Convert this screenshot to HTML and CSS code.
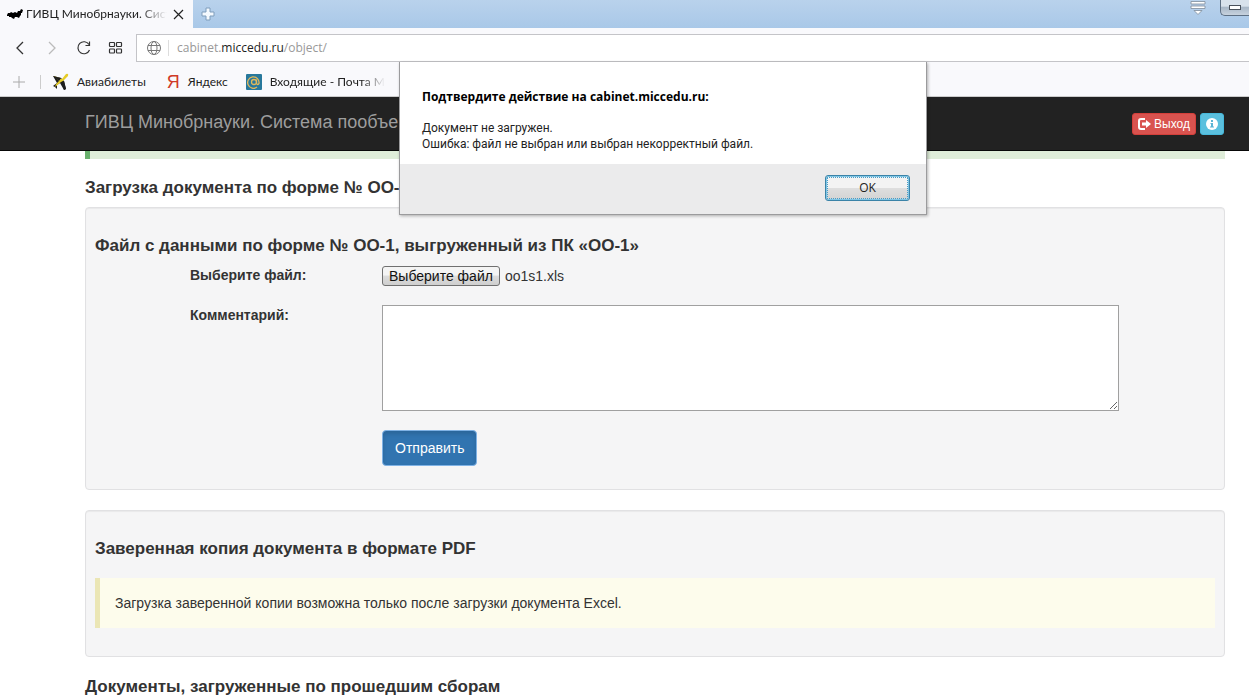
FILE: index.html
```html
<!DOCTYPE html>
<html lang="ru">
<head>
<meta charset="utf-8">
<title>ГИВЦ Минобрнауки. Система пообъектного учета</title>
<link rel="stylesheet" href="styles.css">
</head>
<body>
<div class="browser">
  <div class="tabstrip">
    <div class="tab">
      <svg class="tab-icon" width="16" height="10" viewBox="0 0 16 10"><path d="M0 6L1 4L3 4L4 3L6 4L8 3L10 4L11 2L13 2L14 0L16 1L15 4L14 4L14 6L13 7L12 9L10 8L8 8L7 10L5 9L4 8L2 8L2 7L0 7Z" fill="#000"/></svg>
      <span class="tab-title">ГИВЦ Минобрнауки. Сист</span>
      <button class="plain tab-close" aria-label="Закрыть вкладку"><svg width="11" height="11" viewBox="0 0 11 11"><path d="M1 1L10 10M10 1L1 10" stroke="#222" stroke-width="1.2"/></svg></button>
    </div>
    <button class="plain new-tab" aria-label="Новая вкладка"><svg width="14" height="14" viewBox="0 0 14 14"><path d="M5 1H9V5H13V9H9V13H5V9H1V5H5Z" fill="#f4f9fe" stroke="#7f9dbb"/></svg></button>
    <div class="window-tools">
      <button class="plain" aria-label="Меню вкладок"><svg width="16" height="16" viewBox="0 0 16 16"><path d="M1 1.500H15V4H1ZM1 6H15V8.500H1ZM4 10.500H12L8 14.500Z" fill="#fff" stroke="#7d8b9a" stroke-width=".8"/></svg></button>
      <button class="minimize" aria-label="Свернуть"><svg width="12" height="5" viewBox="0 0 12 5"><rect x=".5" y=".5" width="11" height="4" fill="#fff" stroke="#4a525c"/></svg></button>
    </div>
  </div>
  <div class="toolbar">
    <div class="nav-buttons">
      <button class="plain" aria-label="Назад"><svg width="16" height="16" viewBox="0 0 16 16"><path d="M11 2L5 8L11 14" fill="none" stroke="#333" stroke-width="1.300"/></svg></button>
      <button class="plain" aria-label="Вперёд"><svg width="16" height="16" viewBox="0 0 16 16"><path d="M5 2L11 8L5 14" fill="none" stroke="#bbb" stroke-width="1.300"/></svg></button>
      <button class="plain" aria-label="Обновить"><svg width="16" height="16" viewBox="0 0 16 16"><path d="M13.500 10A6 6 0 1 1 13 4.500M13.500 1.500V5.500H9.500" fill="none" stroke="#333" stroke-width="1.200"/></svg></button>
      <button class="plain" aria-label="Экспресс-панель"><svg width="16" height="16" viewBox="0 0 16 16"><g fill="none" stroke="#333" stroke-width="1.200"><rect x="1.500" y="2.500" width="5" height="4" rx=".7"/><rect x="8.500" y="2.500" width="5" height="4" rx=".7"/><rect x="1.500" y="9" width="5" height="4" rx=".7"/><rect x="8.500" y="9" width="5" height="4" rx=".7"/></g></svg></button>
    </div>
    <div class="address">
      <svg width="16" height="16" viewBox="0 0 16 16"><g fill="none" stroke="#777"><circle cx="8" cy="8" r="6.500"/><ellipse cx="8" cy="8" rx="3" ry="6.500"/><path d="M2 5.500H14M2 10.500H14"/></g></svg>
      <span class="url">cabinet.<span class="domain">miccedu.ru</span>/object/</span>
    </div>
  </div>
  <nav class="bookmarks">
    <button class="plain add-bookmark" aria-label="Добавить закладку"><svg width="14" height="14" viewBox="0 0 14 14"><path d="M7 1V13M1 7H13" stroke="#aaa"/></svg></button>
    <a class="bookmark plane" href="#"><svg width="18" height="18" viewBox="0 0 18 18"><path d="M1 3L9 5L12 8L14 16L12 17L8 10L5 12L5 16L3 14L1 13L5 10Z" fill="#1d1d1d"/><path d="M3 14L4 11L7 8L2 3L10 6L14 1Q17 0 16 3L11 8L9 9Z" fill="#e6cc28"/><path d="M1 3L9 5L7 8ZM10 9L12 8L14 16L12 17Z" fill="#1d1d1d"/></svg>Авиабилеты</a>
    <a class="bookmark yandex" href="#"><span class="ya">Я</span>Яндекс</a>
    <a class="bookmark mail" href="#"><svg width="16" height="16" viewBox="0 0 16 16"><rect width="16" height="16" rx="1" fill="#28789c"/><g fill="none" stroke="#e2b95b" stroke-width="1.300"><circle cx="8" cy="8" r="2.500"/><path d="M10.500 5.500V9.500Q11.500 11.500 13 9.500A5.700 5.700 0 1 0 11 13"/></g></svg><span class="fade">Входящие - Почта M</span></a>
    <span class="next-mark">1</span>
  </nav>
</div>

<header class="navbar">
  <a class="brand" href="#">ГИВЦ Минобрнауки. Система пообъе</a>
  <div class="nav-actions">
    <button class="btn danger"><svg width="13" height="12" viewBox="0 0 13 12"><path d="M7 1H3Q1 1 1 3V9Q1 11 3 11H7" fill="none" stroke="#fff" stroke-width="2"/><path d="M4 4.500H8V2L13 6L8 10V7.500H4Z" fill="#fff"/></svg>Выход</button>
    <button class="btn info" aria-label="Информация"><svg width="12" height="12" viewBox="0 0 12 12"><circle cx="6" cy="6" r="6" fill="#fff"/><path d="M5 2H7V4H5ZM4.500 5H7V8.500H8V9.500H4V8.500H5V6H4.500Z" fill="#5bb5d5"/></svg></button>
  </div>
</header>

<main class="page">
  <div class="success-strip"></div>
  <h4 class="section-title">Загрузка документа по форме № ОО-1</h4>
  <section class="well">
    <h4>Файл с данными по форме № ОО-1, выгруженный из ПК «ОО-1»</h4>
    <form class="form">
      <label class="form-label" for="pick">Выберите файл:</label>
      <div class="file-row"><button class="file-button" id="pick" type="button">Выберите файл</button><output for="pick">oo1s1.xls</output></div>
      <label class="form-label" for="comment">Комментарий:</label>
      <textarea id="comment" class="comment"></textarea>
      <button class="submit" type="button">Отправить</button>
    </form>
  </section>
  <section class="well pdf">
    <h4>Заверенная копия документа в формате PDF</h4>
    <p class="notice">Загрузка заверенной копии возможна только после загрузки документа Excel.</p>
  </section>
  <h4 class="section-title last">Документы, загруженные по прошедшим сборам</h4>
</main>

<div class="dialog" role="alertdialog" aria-labelledby="dlg-title">
  <div class="dialog-body">
    <h2 id="dlg-title">Подтвердите действие на cabinet.miccedu.ru:</h2>
    <p>Документ не загружен.<br>Ошибка: файл не выбран или выбран некорректный файл.</p>
  </div>
  <div class="dialog-footer"><button class="ok">OK</button></div>
</div>
</body>
</html>
```
FILE: styles.css
```css
* { box-sizing: border-box; }
html, body { height: 100%; }
body {
  margin: 0;
  overflow: hidden;
  background: #fff;
  color: #333;
  font: 14px/20px "Liberation Sans", Arial, sans-serif;
}
button { font-family: inherit; cursor: pointer; }
svg { display: block; flex: none; }
h2, h4, p { margin: 0; }
.plain { padding: 0; border: 0; background: none; }

.browser { font: 12px/16px Lato, "Open Sans", sans-serif; color: #222; background: #f9f9fc; }
.tabstrip {
  display: flex;
  align-items: center;
  height: 28px;
  background: linear-gradient(#b9d2ec, #a9c8e8);
}
.tab {
  display: flex;
  align-items: center;
  width: 193px;
  height: 28px;
  padding: 0 9px 0 7px;
  background: #f9f9fc;
}
.tab-title {
  flex: 1;
  min-width: 0;
  margin-left: 3px;
  white-space: nowrap;
  -webkit-mask-image: linear-gradient(90deg, #000 80%, transparent);
  mask-image: linear-gradient(90deg, #000 80%, transparent);
}
.tab-close { margin-left: 6px; }
.new-tab { margin-left: 8px; }
.window-tools {
  display: flex;
  align-items: flex-start;
  gap: 14px;
  height: 28px;
  margin-left: auto;
}
.minimize {
  display: grid;
  place-items: center;
  width: 29px;
  height: 16px;
  padding: 0;
  border: 1px solid #5d6f83;
  border-width: 0 0 1px 1px;
  border-radius: 0 0 0 5px;
  background: linear-gradient(#d8e2ec 40%, #a9b8c8 50%, #c7d2de);
}
.toolbar { display: flex; height: 34px; padding-top: 6px; }
.nav-buttons { display: flex; align-items: center; gap: 16px; padding: 0 12px; }
.address {
  display: flex;
  flex: 1;
  align-items: center;
  border: 1px solid #c4c4c8;
  border-right: 0;
  background: #fff;
  padding-left: 9px;
}
.url { margin-left: 6px; padding-left: 8px; border-left: 1px solid #ddd; color: #999; font-family: "Open Sans", sans-serif; }
.domain { color: #222; }
.bookmarks { display: flex; align-items: center; height: 35px; padding: 5px 0 0 12px; border-bottom: 1px solid #ccc; }
.bookmark { display: flex; align-items: center; gap: 7px; color: #222; text-decoration: none; white-space: nowrap; }
.add-bookmark { padding-right: 14px; border-right: 1px solid #ccc; }
.plane { margin-left: 11px; }
.yandex { gap: 8px; margin-left: 21px; }
.mail { gap: 8px; margin-left: 18px; }
.ya { color: #d03a28; font: 18px/18px "Liberation Sans", sans-serif; }
.fade {
  -webkit-mask-image: linear-gradient(90deg, #000 80%, transparent);
  mask-image: linear-gradient(90deg, #000 80%, transparent);
}
.next-mark { margin-left: 14px; }

.navbar {
  display: flex;
  align-items: center;
  justify-content: space-between;
  height: 54px;
  padding: 0 25px 0 85px;
  background: #222;
  border-bottom: 1px solid #080808;
}
.brand { padding-bottom: 4px; color: #9d9d9d; font-size: 18px; text-decoration: none; white-space: nowrap; }
.nav-actions { display: flex; gap: 4px; }
.btn {
  display: flex;
  align-items: center;
  gap: 3px;
  height: 22px;
  padding: 0 5px;
  border: 1px solid;
  border-radius: 3px;
  color: #fff;
  font-size: 12px;
}
.danger { background: #d9534f; border-color: #d43f3a; }
.info { background: #5bc0de; border-color: #46b8da; }

.page { padding: 0 24px 0 85px; }
.success-strip { height: 8px; background: #dfedd9; border-left: 5px solid #69b06d; }
h4 { font-size: 17px; line-height: 20px; }
.section-title { margin: 19px 0 9px; white-space: nowrap; }
.well {
  padding: 28px 9px 23px;
  margin-bottom: 20px;
  border: 1px solid #e1e1e3;
  border-radius: 4px;
  background: #f5f5f6;
  box-shadow: inset 0 1px 1px rgba(0, 0, 0, .05);
}
.form {
  display: grid;
  grid-template-columns: 192px minmax(0, 737px);
  row-gap: 19px;
  padding: 9px 0 0 95px;
}
.form-label { font-weight: bold; }
.file-row { display: flex; align-items: center; gap: 5px; height: 21px; }
.file-button {
  height: 20px;
  padding: 0 6px;
  border: 1px solid #707070;
  border-radius: 3px;
  background: linear-gradient(#f4f4f4 45%, #dcdcdc 50%, #cfcfcf);
  color: #111;
  font-size: 14px;
  line-height: 18px;
}
.comment { height: 106px; border: 1px solid #a0a0a0; background: #fff; }
.submit {
  grid-column: 2;
  justify-self: start;
  height: 36px;
  padding: 0 12px;
  border: 1px solid #7fb2e5;
  border-radius: 4px;
  background: #3174b0;
  box-shadow: inset 0 3px 4px rgba(0, 0, 0, .13);
  color: #fff;
  font-size: 14px;
}
.pdf { padding-bottom: 28px; }
.notice { margin-top: 19px; padding: 15px; border-left: 5px solid #ebe6b5; background: #fdfcec; }
.last { margin-top: 0; }

.dialog {
  position: absolute;
  top: 62px;
  left: 399px;
  width: 528px;
  border: 1px solid #9b9b9d;
  border-top: 0;
  background: #fff;
  box-shadow: 1px 1px 3px rgba(0, 0, 0, .3);
  color: #222;
  font: 12px/16px "Open Sans", "Noto Sans", sans-serif;
}
.dialog-body { padding: 27px 22px 12px; }
.dialog h2 { margin-bottom: 15px; color: #000; font-size: 12px; line-height: 16px; }
.dialog p { font-family: Roboto, "Open Sans", sans-serif; }
.dialog-footer { display: flex; justify-content: flex-end; padding: 11px 16px 13px; background: #ebebec; }
.ok {
  width: 85px;
  height: 26px;
  padding: 0 0 1px;
  border: 1px solid #3b83a8;
  border-radius: 3px;
  outline: 1px dotted #4a9cc5;
  outline-offset: -3px;
  background: linear-gradient(#f3f3f3 48%, #dedede 52%, #d3d3d3);
  box-shadow: inset 0 0 0 1px #7fc6e6;
  color: #222;
  font-size: 12px;
}
```
